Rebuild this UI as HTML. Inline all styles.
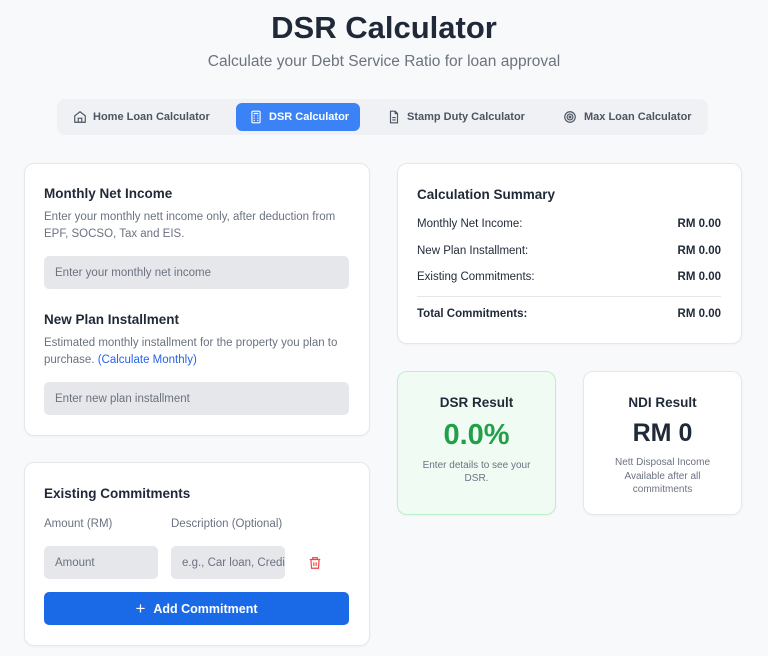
<!DOCTYPE html>
<html><head><style>
*{box-sizing:border-box;margin:0;padding:0}
body{width:768px;height:656px;background:#f8f9fb;font-family:"Liberation Sans",sans-serif;color:#1f2937;position:relative;overflow:hidden}
.a{position:absolute}
h1{position:absolute;top:10px;left:0;width:768px;text-align:center;font-size:31px;font-weight:bold;color:#1f2937}
.sub{top:53px;left:0;width:768px;text-align:center;font-size:15.5px;color:#6b7280}
.tabs{left:57px;top:99px;width:651px;height:36px;background:#eff1f4;border-radius:8px}
.tab{position:absolute;top:4px;height:28px;font-size:11px;font-weight:bold;color:#4b5563;border-radius:6px;white-space:nowrap}
.tab svg{position:absolute;top:7px;width:14px;height:14px}
.tab span{position:absolute;top:7px;line-height:14px}
.card{position:absolute;background:#fff;border:1px solid #e5e7eb;border-radius:10px;box-shadow:0 1px 2px rgba(0,0,0,.04)}
.h{font-size:13.5px;font-weight:bold;color:#1f2937}
.d{font-size:11.5px;color:#6b7280;line-height:17px}
.in{position:absolute;background:#e5e7eb;border-radius:5px;font-size:11.5px;color:#6b7280;padding-left:11px;display:flex;align-items:center;overflow:hidden;white-space:nowrap}
.row{position:absolute;left:20px;right:20px;font-size:11.5px;color:#1f2937;display:flex;justify-content:space-between}
.row b{font-weight:bold}
</style></head><body>
<h1>DSR Calculator</h1>
<div class="a sub">Calculate your Debt Service Ratio for loan approval</div>
<div class="a tabs">
 <div class="tab" style="left:0;width:170px"><svg style="left:16px" viewBox="0 0 24 24" fill="none" stroke="#4b5563" stroke-width="2"><path d="M3 10l9-7 9 7v11H3z"/><path d="M9 21v-7h6v7"/></svg><span style="left:36px">Home Loan Calculator</span></div>
 <div class="tab" style="left:179px;width:124px;background:#3b82f6;color:#fff"><svg style="left:13px" viewBox="0 0 24 24" fill="none" stroke="#fff" stroke-width="2"><rect x="5" y="2" width="14" height="20" rx="2"/><path d="M8 6h8M8 10h2M14 10h2M8 14h2M14 14h2M8 18h2M14 18h2"/></svg><span style="left:33px">DSR Calculator</span></div>
 <div class="tab" style="left:320px;width:170px"><svg style="left:10px" viewBox="0 0 24 24" fill="none" stroke="#4b5563" stroke-width="2"><path d="M14 2H6v20h12V6z"/><path d="M14 2v4h4M9 13h6M9 17h6"/></svg><span style="left:30px">Stamp Duty Calculator</span></div>
 <div class="tab" style="left:500px;width:150px"><svg style="left:6px" viewBox="0 0 24 24" fill="none" stroke="#4b5563" stroke-width="2"><circle cx="12" cy="12" r="9"/><circle cx="12" cy="12" r="5"/><circle cx="12" cy="12" r="1.5"/></svg><span style="left:27px">Max Loan Calculator</span></div>
</div>

<div class="card" style="left:24px;top:163px;width:346px;height:273px">
 <div class="a h" style="left:19px;top:22px">Monthly Net Income</div>
 <div class="a d" style="left:19px;top:45px;width:312px">Enter your monthly nett income only, after deduction from EPF, SOCSO, Tax and EIS.</div>
 <div class="in" style="left:19px;top:92px;width:305px;height:33px">Enter your monthly net income</div>
 <div class="a h" style="left:19px;top:148px">New Plan Installment</div>
 <div class="a d" style="left:19px;top:171px;width:312px">Estimated monthly installment for the property you plan to purchase. <span style="color:#2563eb">(Calculate Monthly)</span></div>
 <div class="in" style="left:19px;top:218px;width:305px;height:33px">Enter new plan installment</div>
</div>

<div class="card" style="left:24px;top:462px;width:346px;height:184px">
 <div class="a h" style="left:19px;top:23px">Existing Commitments</div>
 <div class="a d" style="left:19px;top:53px">Amount (RM)</div>
 <div class="a d" style="left:146px;top:53px">Description (Optional)</div>
 <div class="in" style="left:19px;top:83px;width:114px;height:33px">Amount</div>
 <div class="in" style="left:146px;top:83px;width:114px;height:33px">e.g., Car loan, Credit</div>
 <svg class="a" style="left:283px;top:93px" width="14" height="14" viewBox="0 0 24 24" fill="none" stroke="#ef4444" stroke-width="2"><path d="M3 6h18M8 6V3h8v3M5 6l1 15h12l1-15M10 11v6M14 11v6"/></svg>
 <div class="a" style="left:19px;top:129px;width:305px;height:33px;background:#1a6ae8;border-radius:5px;color:#fff;font-size:12.5px;font-weight:bold;display:flex;align-items:center;justify-content:center;gap:8px"><span style="font-size:17px;font-weight:normal">+</span>Add Commitment</div>
</div>

<div class="card" style="left:397px;top:163px;width:345px;height:181px">
 <div class="a h" style="left:19px;top:23px">Calculation Summary</div>
 <div class="row" style="top:54px;left:19px"><span>Monthly Net Income:</span><b>RM 0.00</b></div>
 <div class="row" style="top:81px;left:19px"><span>New Plan Installment:</span><b>RM 0.00</b></div>
 <div class="row" style="top:107px;left:19px"><span>Existing Commitments:</span><b>RM 0.00</b></div>
 <div class="a" style="left:19px;right:20px;top:132px;border-top:1px solid #e5e7eb"></div>
 <div class="row" style="top:144px;left:19px"><b>Total Commitments:</b><b>RM 0.00</b></div>
</div>

<div class="card" style="left:397px;top:371px;width:159px;height:144px;background:#f0fbf3;border-color:#bbf0cc;text-align:center">
 <div class="a h" style="left:0;width:100%;top:23px">DSR Result</div>
 <div class="a" style="left:0;width:100%;top:47px;font-size:29px;font-weight:bold;color:#22a049">0.0%</div>
 <div class="a" style="left:20px;width:117px;top:87px;font-size:10px;line-height:13px;color:#6b7280">Enter details to see your DSR.</div>
</div>
<div class="card" style="left:583px;top:371px;width:159px;height:144px;text-align:center">
 <div class="a h" style="left:0;width:100%;top:23px">NDI Result</div>
 <div class="a" style="left:0;width:100%;top:47px;font-size:25px;font-weight:bold;color:#1f2937">RM 0</div>
 <div class="a" style="left:15px;width:127px;top:84px;font-size:10px;line-height:13.5px;color:#6b7280">Nett Disposal Income Available after all commitments</div>
</div>
</body></html>
